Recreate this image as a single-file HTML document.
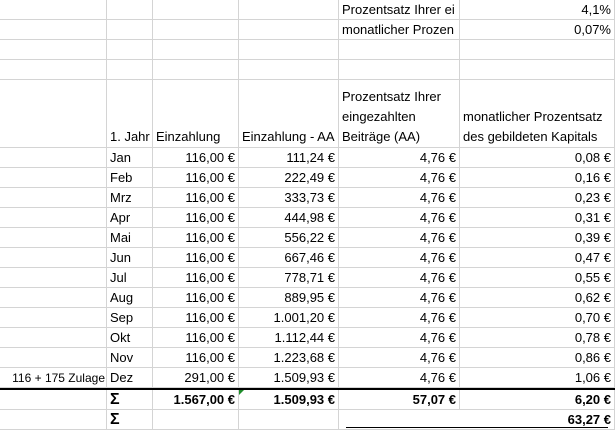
<html><head><style>
body{margin:0;background:#fff;width:615px;height:434px;overflow:hidden;font-family:"Liberation Sans",Arial,sans-serif;font-size:13px;color:#000;position:relative}
.row{position:absolute;left:0;display:flex;height:20px}
.row div{box-sizing:border-box;height:100%;border-right:1px solid #d4d4d4;border-bottom:1px solid #d4d4d4;padding:0 3px;white-space:nowrap;overflow:hidden;line-height:20px;flex:none}
.row div:nth-child(1){width:107px}.row div:nth-child(2){width:46px}.row div:nth-child(3){width:86px}.row div:nth-child(4){width:100px}.row div:nth-child(5){width:121px}.row div:nth-child(6){width:155px}
.r{text-align:right}.b{font-weight:bold}
.hdr{height:68px}
.hdr div{display:flex;flex-direction:column;justify-content:flex-end;white-space:normal!important;line-height:20px!important;padding-bottom:0!important}
</style></head><body>
<div class="row" style="top:0"><div></div><div></div><div></div><div></div><div>Prozentsatz Ihrer ei</div><div class="r">4,1%</div></div>
<div class="row" style="top:20px"><div></div><div></div><div></div><div></div><div>monatlicher Prozen</div><div class="r">0,07%</div></div>
<div class="row" style="top:40px"><div></div><div></div><div></div><div></div><div></div><div></div></div>
<div class="row" style="top:60px"><div></div><div></div><div></div><div></div><div></div><div></div></div>
<div class="row hdr" style="top:80px"><div></div><div><span style="white-space:nowrap">1. Jahr</span></div><div>Einzahlung</div><div style="padding-right:0"><span style="white-space:nowrap">Einzahlung - AA</span></div><div>Prozentsatz Ihrer eingezahlten Beiträge (AA)</div><div style="padding-right:0"><span style="white-space:nowrap">monatlicher Prozentsatz</span><span style="white-space:nowrap">des gebildeten Kapitals</span></div></div>
<div class="row" style="top:148px"><div></div><div>Jan</div><div class="r">116,00 €</div><div class="r">111,24 €</div><div class="r">4,76 €</div><div class="r">0,08 €</div></div>
<div class="row" style="top:168px"><div></div><div>Feb</div><div class="r">116,00 €</div><div class="r">222,49 €</div><div class="r">4,76 €</div><div class="r">0,16 €</div></div>
<div class="row" style="top:188px"><div></div><div>Mrz</div><div class="r">116,00 €</div><div class="r">333,73 €</div><div class="r">4,76 €</div><div class="r">0,23 €</div></div>
<div class="row" style="top:208px"><div></div><div>Apr</div><div class="r">116,00 €</div><div class="r">444,98 €</div><div class="r">4,76 €</div><div class="r">0,31 €</div></div>
<div class="row" style="top:228px"><div></div><div>Mai</div><div class="r">116,00 €</div><div class="r">556,22 €</div><div class="r">4,76 €</div><div class="r">0,39 €</div></div>
<div class="row" style="top:248px"><div></div><div>Jun</div><div class="r">116,00 €</div><div class="r">667,46 €</div><div class="r">4,76 €</div><div class="r">0,47 €</div></div>
<div class="row" style="top:268px"><div></div><div>Jul</div><div class="r">116,00 €</div><div class="r">778,71 €</div><div class="r">4,76 €</div><div class="r">0,55 €</div></div>
<div class="row" style="top:288px"><div></div><div>Aug</div><div class="r">116,00 €</div><div class="r">889,95 €</div><div class="r">4,76 €</div><div class="r">0,62 €</div></div>
<div class="row" style="top:308px"><div></div><div>Sep</div><div class="r">116,00 €</div><div class="r">1.001,20 €</div><div class="r">4,76 €</div><div class="r">0,70 €</div></div>
<div class="row" style="top:328px"><div></div><div>Okt</div><div class="r">116,00 €</div><div class="r">1.112,44 €</div><div class="r">4,76 €</div><div class="r">0,78 €</div></div>
<div class="row" style="top:348px"><div></div><div>Nov</div><div class="r">116,00 €</div><div class="r">1.223,68 €</div><div class="r">4,76 €</div><div class="r">0,86 €</div></div>
<div class="row" style="top:368px"><div class="r" style="padding:0 1px;font-size:12px">116 + 175 Zulage</div><div>Dez</div><div class="r">291,00 €</div><div class="r">1.509,93 €</div><div class="r">4,76 €</div><div class="r">1,06 €</div></div>
<div style="position:absolute;left:0;top:388px;width:615px;height:2px;background:#000"></div>
<div class="row" style="top:390px"><div></div><div class="b" style="font-size:16px">Σ</div><div class="r b">1.567,00 €</div><div class="r b">1.509,93 €</div><div class="r b">57,07 €</div><div class="r b">6,20 €</div></div>
<div class="row" style="top:410px"><div></div><div class="b" style="font-size:16px">Σ</div><div></div><div></div><div style="border-right:none"></div><div class="r b">63,27 €</div></div>
<div style="position:absolute;left:239px;top:390px;width:0;height:0;border-top:5px solid #1e8c2a;border-right:5px solid transparent"></div>
<div style="position:absolute;left:346px;top:427px;width:262px;height:1px;background:#000"></div>
</body></html>
